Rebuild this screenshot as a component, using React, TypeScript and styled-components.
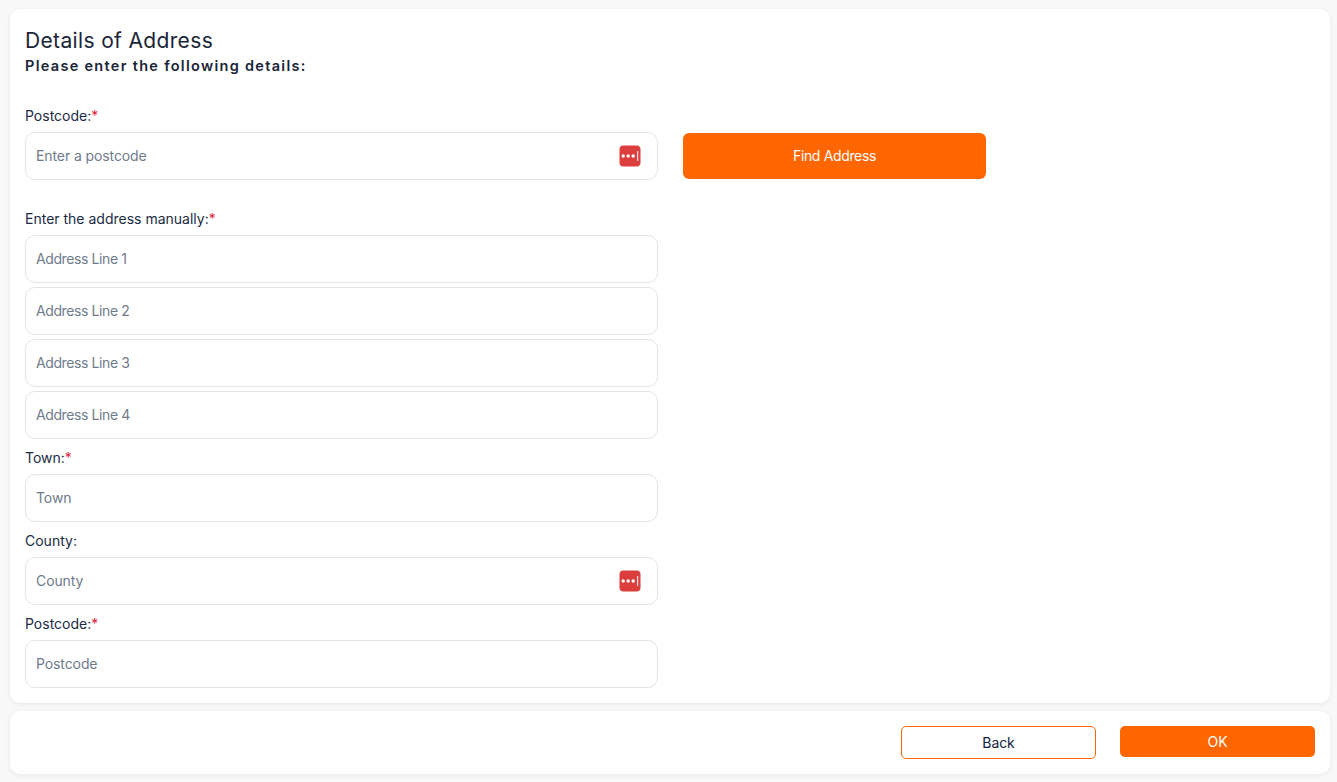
import React from "react";
import styled, { createGlobalStyle } from "styled-components";

const Global = createGlobalStyle`
  html, body { margin: 0; padding: 0; background: #f8f8f8; }
  body { font-family: Inter, "Liberation Sans", sans-serif; }
  * { box-sizing: border-box; }
`;

const Page = styled.div`
  width: 1337px;
  height: 782px;
  padding: 9px 7px 8px 10px;
  display: flex;
  flex-direction: column;
  gap: 8px;
  overflow: hidden;
`;

const Card = styled.main`
  height: 694px;
  background: #fff;
  border-radius: 10px;
  box-shadow: 0 1px 5px rgba(0, 0, 0, 0.07);
  padding: 19px 15px 0;
`;

const Title = styled.h1`
  margin: 0 0 3px;
  height: 25px;
  font-size: 21px;
  line-height: 25px;
  font-weight: 400;
  letter-spacing: 0.35px;
  color: #1a2438;
`;

const Subtitle = styled.h2`
  margin: 0 0 33px;
  height: 19px;
  font-size: 14.5px;
  line-height: 19px;
  font-weight: 600;
  letter-spacing: 1.3px;
  color: #1a2438;
`;

const Label = styled.label`
  display: block;
  height: 17px;
  margin-bottom: 7px;
  font-size: 14px;
  line-height: 15px;
  font-weight: 400;
  letter-spacing: 0;
  color: #1a2b45;
`;

const Req = styled.span`
  color: #e0263c;
`;

const Row = styled.div`
  display: flex;
  align-items: center;
  gap: 25px;
  margin-bottom: 31px;
`;

const InputWrap = styled.div<{ $gap?: number }>`
  position: relative;
  width: 633px;
  height: 48px;
  margin-bottom: ${(p) => p.$gap ?? 0}px;
`;

const Input = styled.input<{ $tight?: boolean }>`
  width: 100%;
  height: 100%;
  padding: 0 50px 2px 10px;
  border: 1px solid #e3e5e8;
  border-radius: 10px;
  background: #fff;
  font-family: inherit;
  font-size: 14px;
  letter-spacing: ${(p) => (p.$tight ? "-0.4px" : "-0.1px")};
  color: #1a2233;
  outline: none;
  &::placeholder { color: #6f7b8c; opacity: 1; }
`;

const KeyBadge = styled.svg`
  position: absolute;
  right: 17px;
  top: 13px;
  width: 22px;
  height: 22px;
`;

const Primary = styled.button`
  width: 303px;
  height: 46px;
  padding: 0 0 2px;
  border: none;
  border-radius: 6px;
  background: #ff6600;
  color: #fff;
  font-family: inherit;
  font-size: 14px;
  letter-spacing: -0.35px;
`;

const Group = styled.div`
  display: flex;
  flex-direction: column;
`;

const Footer = styled.footer`
  height: 63px;
  background: #fff;
  border-radius: 10px;
  box-shadow: 0 1px 5px rgba(0, 0, 0, 0.07);
  display: flex;
  justify-content: flex-end;
  align-items: flex-start;
  gap: 24px;
  padding: 15px 15px 0;
`;

const Back = styled.button`
  width: 195px;
  height: 33px;
  border: 1px solid #ff6600;
  border-radius: 5px;
  background: #fff;
  color: #12233f;
  font-family: inherit;
  font-size: 14px;
  letter-spacing: -0.1px;
`;

const Ok = styled.button`
  width: 195px;
  height: 31px;
  border: none;
  border-radius: 5px;
  background: #ff6600;
  color: #fff;
  font-family: inherit;
  font-size: 14px;
`;

const Key = () => (
  <KeyBadge viewBox="0 0 22 22" aria-hidden="true">
    <rect x="0.5" y="0.5" width="21" height="21" rx="4" fill="#dc3d3d" />
    <circle cx="4.2" cy="11" r="1.7" fill="#fff" />
    <circle cx="9.2" cy="11" r="1.7" fill="#fff" />
    <circle cx="14.2" cy="11" r="1.7" fill="#fff" />
    <rect x="18.2" y="6" width="1" height="10" fill="#fff" />
  </KeyBadge>
);

const Required = () => <Req>*</Req>;

export default function App() {
  return (
    <>
      <Global />
      <Page>
        <Card>
          <Title>Details of Address</Title>
          <Subtitle>Please enter the following details:</Subtitle>

          <Label>Postcode:<Required /></Label>
          <Row>
            <InputWrap>
              <Input placeholder="Enter a postcode" />
              <Key />
            </InputWrap>
            <Primary>Find Address</Primary>
          </Row>

          <Label>Enter the address manually:<Required /></Label>
          <Group>
            <InputWrap $gap={4}><Input $tight placeholder="Address Line 1" /></InputWrap>
            <InputWrap $gap={4}><Input $tight placeholder="Address Line 2" /></InputWrap>
            <InputWrap $gap={4}><Input $tight placeholder="Address Line 3" /></InputWrap>
            <InputWrap $gap={11}><Input $tight placeholder="Address Line 4" /></InputWrap>
          </Group>

          <Label>Town:<Required /></Label>
          <InputWrap $gap={11}><Input placeholder="Town" /></InputWrap>

          <Label>County:</Label>
          <InputWrap $gap={11}>
            <Input placeholder="County" />
            <Key />
          </InputWrap>

          <Label>Postcode:<Required /></Label>
          <InputWrap><Input placeholder="Postcode" /></InputWrap>
        </Card>
        <Footer>
          <Back>Back</Back>
          <Ok>OK</Ok>
        </Footer>
      </Page>
    </>
  );
}
